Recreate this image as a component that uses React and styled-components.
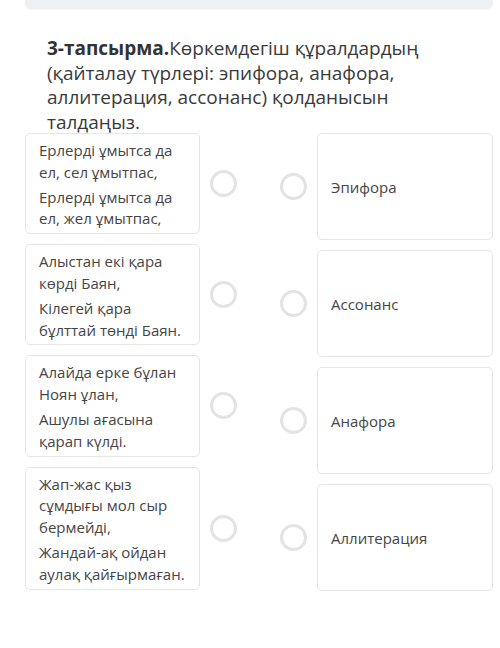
import styled, { createGlobalStyle } from "styled-components";

const GlobalStyle = createGlobalStyle`
  body {
    margin: 0;
    background: #ffffff;
    font-family: "Open Sans", "Noto Sans", sans-serif;
  }
`;

const leftItems = [
  ["Ерлерді ұмытса да ел, сел ұмытпас,", "Ерлерді ұмытса да ел, жел ұмытпас,"],
  ["Алыстан екі қара көрді Баян,", "Кілегей қара бұлттай төнді Баян."],
  ["Алайда ерке бұлан Ноян ұлан,", "Ашулы ағасына қарап күлді."],
  ["Жап-жас қыз сұмдығы мол сыр бермейді,", "Жандай-ақ ойдан аулақ қайғырмаған."]
];

const rightItems = ["Эпифора", "Ассонанс", "Анафора", "Аллитерация"];

function App() {
  return (
    <Page>
      <GlobalStyle />
      <TopBar />
      <Title>
        <b>3-тапсырма.</b>Көркемдегіш құралдардың (қайталау түрлері: эпифора, анафора, аллитерация, ассонанс) қолданысын талдаңыз.
      </Title>
      <Board>
        <Column>
          {leftItems.map((lines, index) => (
            <LeftRow key={index}>
              <QuoteCard>
                {lines.map((line, i) => (
                  <Verse key={i}>{line}</Verse>
                ))}
              </QuoteCard>
              <Radio />
            </LeftRow>
          ))}
        </Column>
        <Column $spread>
          {rightItems.map((name, index) => (
            <RightRow key={index}>
              <Radio />
              <AnswerCard>{name}</AnswerCard>
            </RightRow>
          ))}
        </Column>
      </Board>
    </Page>
  );
}

export default App;

const Page = styled.div`
  width: 500px;
  height: 648px;
  overflow: hidden;
  padding: 0 7px 0 25px;
  box-sizing: border-box;
`;

const TopBar = styled.div`
  height: 9px;
  background: #eff0f3;
  border-radius: 0 0 6px 6px;
  box-shadow: 0 1px 2px rgba(0, 0, 0, 0.04);
`;

const Title = styled.p`
  margin: 27px 0 0 22px;
  font-size: 19px;
  line-height: 24.5px;
  color: #3a3a3a;
  width: 390px;

  b {
    font-weight: 700;
    color: #333333;
  }
`;

const Board = styled.div`
  margin-top: -1px;
  display: flex;
  justify-content: space-between;
  align-items: stretch;
`;

const Column = styled.div`
  display: flex;
  flex-direction: column;
  gap: 10px;
  justify-content: ${(p) => (p.$spread ? "space-between" : "flex-start")};
`;

const LeftRow = styled.div`
  display: flex;
  align-items: center;
  gap: 10px;
`;

const RightRow = styled.div`
  display: flex;
  align-items: center;
  gap: 10px;
  height: 107px;
`;

const QuoteCard = styled.div`
  width: 175px;
  box-sizing: border-box;
  padding: 6px 10px 3px 13px;
  border: 1.5px solid #e6e6e6;
  border-radius: 5px;
  background: #ffffff;
`;

const Verse = styled.p`
  margin: 0 0 3px;
  font-size: 15px;
  line-height: 21.8px;
  color: #454545;

  &:last-child {
    margin-bottom: 0;
  }
`;

const Radio = styled.div`
  width: 27px;
  height: 27px;
  box-sizing: border-box;
  border-radius: 50%;
  border: 3px solid #e3e3e3;
  background: #ffffff;
  flex-shrink: 0;
`;

const AnswerCard = styled.div`
  width: 176px;
  height: 107px;
  box-sizing: border-box;
  display: flex;
  align-items: center;
  padding: 0 13px;
  border: 1.5px solid #e6e6e6;
  border-radius: 5px;
  background: #ffffff;
  font-size: 15px;
  color: #454545;
`;
